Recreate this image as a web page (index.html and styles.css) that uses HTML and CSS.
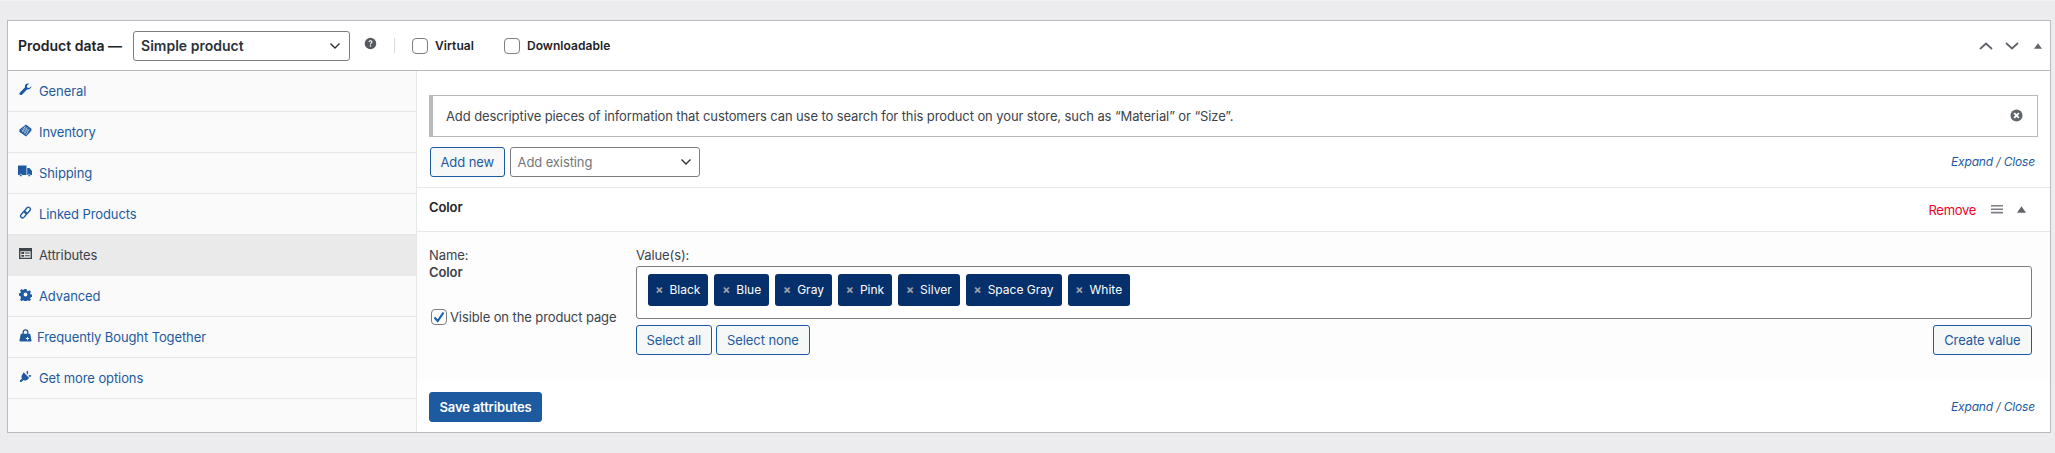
FILE: index.html
```html
<!DOCTYPE html>
<html lang="en">
<head>
<meta charset="utf-8">
<title>Product data</title>
<link rel="stylesheet" href="styles.css">
</head>
<body>
<div class="panel">
  <header class="head">
    <strong class="head-title">Product data —</strong>
    <div class="select type-select"><span>Simple product</span><svg class="chev" viewBox="0 0 12 8"><path d="M1.5 1.5 6 6l4.500-4.500"/></svg></div>
    <svg class="help" viewBox="0 0 14 14"><circle cx="7" cy="7" r="6.200" fill="#555a60"/><path d="M4.900 5.400C5 4.200 5.900 3.600 7 3.600c1.200 0 2.100.7 2.100 1.800 0 1.500-1.700 1.500-1.700 2.800H6.400c0-1.900 1.500-1.900 1.500-2.800 0-.5-.4-.8-.9-.8-.6 0-.9.4-1 .9z" fill="#fff"/><rect x="6.300" y="9" width="1.300" height="1.400" fill="#fff"/></svg>
    <span class="sep"></span>
    <label class="check-label virtual"><span class="box"></span>Virtual</label>
    <label class="check-label download"><span class="box"></span>Downloadable</label>
    <div class="head-arrows">
      <svg class="arrow" viewBox="0 0 14 8"><path d="M1 7l6-5.500L13 7"/></svg>
      <svg class="arrow" viewBox="0 0 14 8"><path d="M1 1l6 5.500L13 1"/></svg>
      <svg class="tri" viewBox="0 0 10 7"><path d="M5 0l5 7H0z"/></svg>
    </div>
  </header>
  <div class="body">
    <nav class="side">
      <a class="tab"><svg class="ico" viewBox="0 0 14 14"><path d="M13.500 3.200 11 5.400 9 5 8.500 3 10.800.8C9 .1 7 .9 6.500 2.600c-.2.700-.2 1.400 0 2L1 10.300c-.7.700-.6 1.700 0 2.300.7.600 1.600.6 2.200 0l5.500-5.600c2.400.6 4.900-1.300 4.800-4.500z"/></svg>General</a>
      <a class="tab"><svg class="ico" viewBox="0 0 14 14"><path d="M7.500.5l6 4.500-.4 2.500-5.400 6L.5 8.500.5 6z"/><path d="M5 3l6 4.500M3.700 4.500l6 4.500M2.400 6l6 4.500M7 2 3.600 9M9 3.400 5.600 10.400M11 5 7.600 12" stroke="#cfdcec" stroke-width=".7" fill="none"/></svg>Inventory</a>
      <a class="tab"><svg class="ico truck" viewBox="0 0 14 12"><path d="M0 .5h8.500V10H0zM9.200 3h2.300L14 6v4H9.200z"/><circle cx="2.800" cy="10.400" r="1.200" stroke="#fafafa" stroke-width=".6"/><circle cx="11.200" cy="10.400" r="1.200" stroke="#fafafa" stroke-width=".6"/></svg>Shipping</a>
      <a class="tab"><svg class="ico" viewBox="0 0 14 14"><g fill="none" stroke="currentColor" stroke-width="1.500"><rect x="7" y=".9" width="4.200" height="7.500" rx="2.100" transform="rotate(40 9 4.600)"/><rect x="2.800" y="5.600" width="4.200" height="7.500" rx="2.100" transform="rotate(40 4.900 9.400)"/></g></svg>Linked Products</a>
      <a class="tab active"><svg class="ico" viewBox="0 0 14 12"><path fill-rule="evenodd" d="M0 0h14v12H0zM1.500 3.500V10.500h11V3.500z"/><path d="M2.500 4.500h3V6.500h-3zM6.500 4.800h5V6h-5zM2.500 7.500h3v2h-3zM6.500 7.800h5V9h-5z"/></svg>Attributes</a>
      <a class="tab"><svg class="ico" viewBox="0 0 14 14"><path fill-rule="evenodd" d="M5.700.5h2.600l.4 1.900 1.300.6 1.700-1 1.800 1.800-1 1.700.6 1.300 1.900.4v2.600l-1.900.4-.6 1.300 1 1.700-1.800 1.800-1.700-1-1.300.6-.4 1.900H5.700l-.4-1.900-1.300-.6-1.700 1-1.800-1.800 1-1.700L.9 8.700-1 8.300V5.700l1.900-.4.6-1.300-1-1.700L2.300.5l1.700 1 1.300-.6zM7 4.700a2.300 2.300 0 1 0 0 4.600 2.300 2.300 0 0 0 0-4.600z" transform="translate(.7 .7) scale(.9)"/></svg>Advanced</a>
      <a class="tab tab-tight"><svg class="ico" viewBox="0 0 14 14"><path fill-rule="evenodd" d="M2 5h1.800V3.500a3.200 3.200 0 0 1 6.400 0V5H12l1.500 7.500c0 .8-.5 1-1 1h-11c-.5 0-1-.2-1-1zM5.200 5h3.600V3.500a1.800 1.800 0 0 0-3.600 0z"/><path d="M8.700 8.500h1v1.300H11v1H9.700v1.300h-1v-1.300H7.400v-1h1.300z" fill="#fafafa"/></svg>Frequently Bought Together</a>
      <a class="tab"><svg class="ico" viewBox="0 0 14 14"><path d="M5 2.500l6 6-1.800 1.800c-1.300 1.300-3 1.300-4.300.5L2.600 13 1 13l0-1.600 2.200-2.300C2.400 7.800 2.400 6.100 3.700 4.800zM8 1.500 9.500.8l.4 3-1.200 1.200zM10 6.500l1.200-1.200 2.300.6-1.500 2z"/></svg>Get more options</a>
    </nav>
    <main class="content">
      <div class="notice"><span>Add descriptive pieces of information that customers can use to search for this product on your store, such as “Material” or “Size”.</span>
        <svg class="notice-x" viewBox="0 0 14 14"><circle cx="7" cy="7" r="6.500" fill="#62666c"/><path d="M4.500 4.500l5 5M9.500 4.500l-5 5" stroke="#fff" stroke-width="2" fill="none"/></svg>
      </div>
      <div class="tools">
        <button class="btn">Add new</button>
        <div class="select existing"><span>Add existing</span><svg class="chev" viewBox="0 0 12 8"><path d="M1.500 1.500 6 6l4.500-4.500"/></svg></div>
        <div class="expand"><a>Expand</a> / <a>Close</a></div>
      </div>
      <section class="attr">
        <div class="attr-head">
          <strong>Color</strong>
          <a class="remove">Remove</a>
          <svg class="menu" viewBox="0 0 12 9"><path d="M0 0h12v1.600H0zM0 3.400h12V5H0zM0 6.800h12v1.600H0z"/></svg>
          <svg class="tri small" viewBox="0 0 10 7"><path d="M5 0l5 7H0z"/></svg>
        </div>
        <div class="attr-body">
          <div class="attr-left">
            <div class="line">Name:</div>
            <strong class="line">Color</strong>
            <label class="check-label visible"><span class="box on"><svg viewBox="0 0 14 14"><path d="M2.500 7.500 5.700 11 11.500 2.500"/></svg></span>Visible on the product page</label>
          </div>
          <div class="attr-right">
            <div class="line">Value(s):</div>
            <div class="chips">
              <span class="chip"><i>×</i>Black</span>
              <span class="chip"><i>×</i>Blue</span>
              <span class="chip"><i>×</i>Gray</span>
              <span class="chip"><i>×</i>Pink</span>
              <span class="chip"><i>×</i>Silver</span>
              <span class="chip"><i>×</i>Space Gray</span>
              <span class="chip"><i>×</i>White</span>
            </div>
            <div class="chip-actions">
              <button class="btn">Select all</button>
              <button class="btn wide">Select none</button>
              <button class="btn wide create">Create value</button>
            </div>
          </div>
        </div>
      </section>
      <div class="foot">
        <button class="btn primary">Save attributes</button>
        <div class="expand"><a>Expand</a> / <a>Close</a></div>
      </div>
    </main>
  </div>
</div>
</body>
</html>
```
FILE: styles.css
```css
* { box-sizing: border-box; }
html, body { margin: 0; }
body {
  background: #ececee;
  color: #3c434a;
  font: 13px/18px Inter, "Liberation Sans", sans-serif;
  letter-spacing: -0.1px;
  height: 453px;
  padding: 20px 4px 0 7px;
  overflow: hidden;
  border-top: 1px solid #f3f3f4;
}
.panel {
  height: 413px;
  margin-top: -1px;
  background: #fff;
  border: 1px solid #b9babd;
  display: flex;
  flex-direction: column;
}
.head {
  height: 50px;
  flex: none;
  display: flex;
  align-items: center;
  padding: 0 0 0 10px;
  border-bottom: 1px solid #b9babd;
  color: #1d2327;
}
.head-title { font-size: 14px; letter-spacing: 0; font-weight: 600; margin-right: 11px; }
.select {
  display: flex;
  align-items: center;
  justify-content: space-between;
  height: 30px;
  border: 1px solid #7a7d82;
  border-radius: 3px;
  background: #fff;
  padding: 0 8px 0 7px;
}
.type-select { width: 217px; font-size: 14px; letter-spacing: 0; font-weight: 600; color: #2c3338; }
.chev { width: 12px; height: 8px; fill: none; stroke: #2c3338; stroke-width: 1.400; }
.help { width: 13px; height: 13px; margin: -4px 0 0 14px; }
.sep { width: 1px; height: 15px; background: #dcdcde; margin: 0 0 0 17px; }
.check-label { display: flex; align-items: center; gap: 7px; }
.head .check-label { font-size: 12px; font-weight: 600; letter-spacing: 0.05px; }
.virtual { margin-left: 17px; }
.download { margin-left: 30px; }
.box {
  width: 16px;
  height: 16px;
  background: #fff;
  border: 1px solid #7a7d82;
  border-radius: 4px;
  flex: none;
  display: block;
}
.box svg { display: block; width: 14px; height: 14px; fill: none; stroke: #1c62ad; stroke-width: 2.200; }
.head-arrows { margin-left: auto; display: flex; align-items: center; padding-right: 8px; }
.arrow { width: 14px; height: 8px; fill: none; stroke: #62666c; stroke-width: 1.800; margin-right: 12px; }
.tri { width: 8px; height: 6px; fill: #62666c; margin-left: 3px; }
.body { flex: 1; display: flex; min-height: 0; }
.side {
  width: 409px;
  flex: none;
  background: #fafafa;
  border-right: 1px solid #e8e8e9;
}
.tab {
  display: flex;
  align-items: center;
  height: 41px;
  padding: 0 0 0 11px;
  gap: 8px;
  color: #1d5aa0;
  border-bottom: 1px solid #e6e6e7;
}
.tab-tight { gap: 6px; }
.tab.active { background: #eaeaea; color: #3c434a; border-bottom-color: #eaeaea; }
.ico { width: 13px; height: 13px; fill: currentColor; flex: none; margin-top: -4px; margin-right: -1px; }
.truck { width: 14px; height: 12px; margin-right: -1px; margin-left: -1px; }
.content { flex: 1; min-width: 0; display: flex; flex-direction: column; }
.notice {
  margin: 24px 12px 0 12px;
  height: 42px;
  border: 1px solid #b9babd;
  border-left-width: 4px;
  display: flex;
  align-items: center;
  justify-content: space-between;
  padding: 0 14px 0 13px;
  color: #3c434a;
}
.notice-x { width: 13px; height: 13px; }
.tools {
  display: flex;
  align-items: center;
  height: 41px;
  padding: 0 15px 10px 13px;
  gap: 5px;
  margin-top: 10px;
}
.btn {
  font: inherit;
  letter-spacing: inherit;
  height: 30px;
  padding: 0 9.5px;
  color: #1d5aa0;
  background: #f6f7f7;
  border: 1px solid #1d5aa0;
  border-radius: 3px;
}
.btn.wide { padding: 0 10.5px; }
.existing { width: 190px; color: #73777c; padding-right: 7px; }
.expand { margin-left: auto; font-style: italic; font-size: 12px; letter-spacing: -0.15px; color: #50575e; }
.expand a { color: #1d5aa0; }
.attr { border-top: 1px solid #e8e8e9; border-bottom: 1px solid #e3e3e4; height: 194px; }
.attr-head {
  height: 44px;
  padding: 0 24px 8px 12px;
  display: flex;
  align-items: center;
  border-bottom: 1px solid #e8e8e9;
  color: #1d2327;
}
.attr-head strong { font-weight: 600; margin-top: 2px; }
.remove { color: #f5001f; margin-left: auto; margin-top: 8px; letter-spacing: -0.3px; }
.menu { width: 12px; height: 9px; fill: #7c7f84; margin: 8px 0 0 15px; }
.tri.small { margin: 7px 0 0 14px; width: 9px; height: 7px; }
.attr-body { height: 149px; background: #fdfdfd; display: flex; padding: 15px 18px 0 12px; }
.attr-left { width: 207px; flex: none; }
.line { display: block; height: 17px; line-height: 16px; font-weight: inherit; }
strong.line { font-weight: 600; line-height: 16px; }
.visible { margin: 27px 0 0 2px; gap: 3px; }
.attr-right { flex: 1; min-width: 0; }
.chips {
  height: 53px;
  margin-top: 2px;
  border: 1px solid #7a7d82;
  border-radius: 3px;
  background: #fff;
  padding: 7px 10.5px;
  display: flex;
  align-items: flex-start;
  gap: 6px;
}
.chip {
  height: 32px;
  display: flex;
  align-items: center;
  background: #06306b;
  color: #fff;
  border-radius: 3px;
  padding: 0 8px 0 7.8px;
  font-size: 12px;
  letter-spacing: 0;
}
.chip i { font-style: normal; font-weight: 700; color: #a0a3a8; margin-right: 6px; font-size: 12px; }
.chip-actions { display: flex; gap: 4px; margin-top: 6px; }
.create { margin-left: auto; }
.foot {
  display: flex;
  align-items: center;
  justify-content: space-between;
  height: 51px;
  padding: 0 15px 0 12px;
}
.primary { background: #1e5a9f; color: #fff; font-weight: 600; letter-spacing: -0.15px; }
```
